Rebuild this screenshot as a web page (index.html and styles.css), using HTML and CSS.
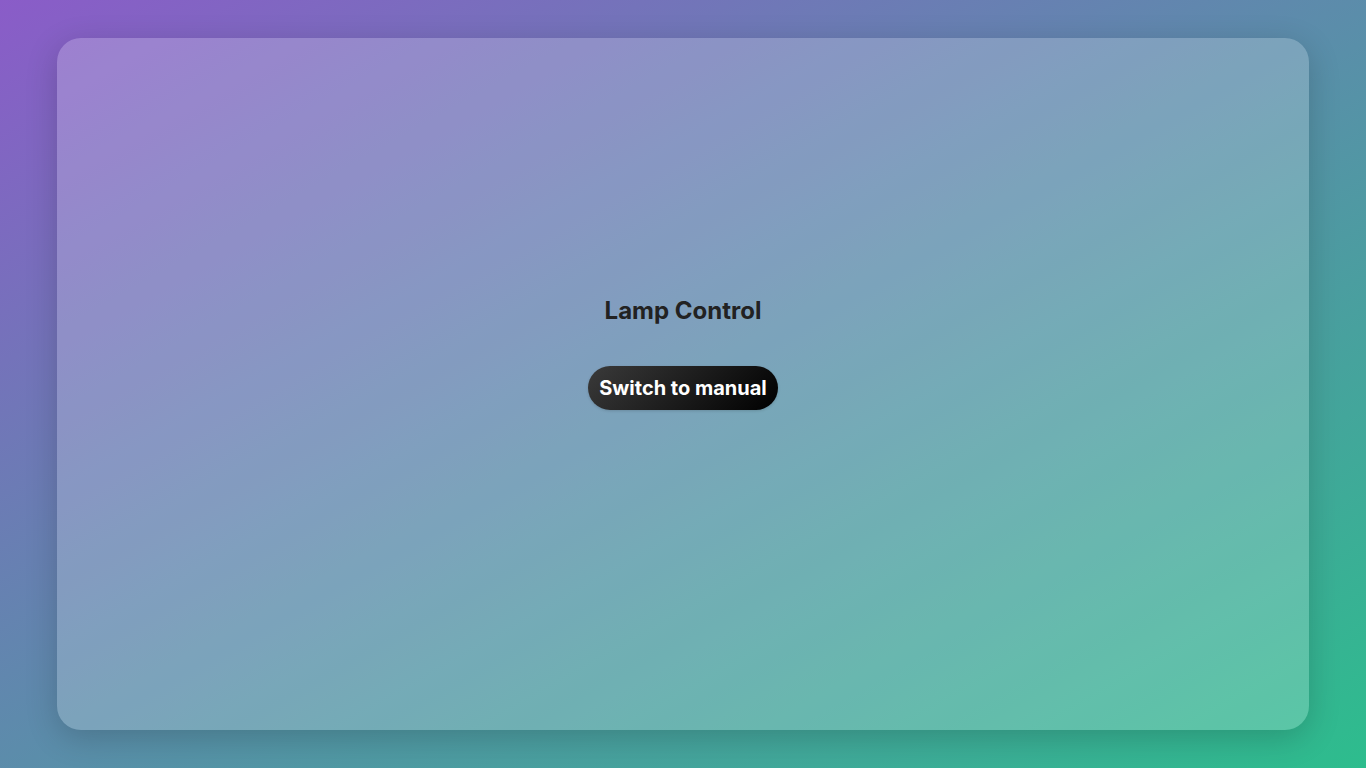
FILE: index.html
```html
<!DOCTYPE html>
<html lang="en">
<head>
<meta charset="utf-8">
<title>Lamp Control</title>
<link rel="stylesheet" href="styles.css">
</head>
<body>
<main class="card">
  <h1 class="title">Lamp Control</h1>
  <button class="toggle">Switch to manual</button>
  <div class="spacer"></div>
</main>
</body>
</html>
```
FILE: styles.css
```css
html, body {
  margin: 0;
  height: 100%;
}
body {
  box-sizing: border-box;
  padding: 38px 57px;
  background: linear-gradient(to bottom right, #8a5cc8 0%, #2dbd8d 100%);
  font-family: Inter, "Noto Sans", sans-serif;
  display: flex;
}
.card {
  flex: 1;
  border-radius: 24px;
  background: rgba(255, 255, 255, 0.2);
  box-shadow: 0 8px 32px rgba(0, 0, 0, 0.18);
  display: flex;
  flex-direction: column;
  align-items: center;
  justify-content: center;
}
.title {
  margin: 0 0 41px;
  font-size: 24px;
  font-weight: 700;
  color: #222;
  line-height: 29px;
}
.toggle {
  border: none;
  border-radius: 22px;
  height: 44px;
  padding: 0 11px;
  background: linear-gradient(135deg, #3a3a3a, #000);
  color: #fff;
  font-family: Inter, "Noto Sans", sans-serif;
  font-size: 20px;
  font-weight: 700;
  box-shadow: 0 1px 3px rgba(0,0,0,0.15);
}
.spacer {
  height: 63px;
}
```
